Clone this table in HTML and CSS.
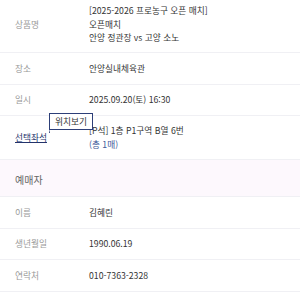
FILE: index.html
```html
<!DOCTYPE html>
<html lang="ko">
<head>
  <meta charset="UTF-8">
  <title>예매 정보</title>
  <link rel="stylesheet" href="styles.css">
</head>
<body>

<div class="info-list">
  <div class="info-row first">
    <div class="info-label">상품명</div>
    <div class="info-value">
      [2025-2026 프로농구 오픈 매치]<br>
      오픈매치<br>
      안양 정관장 vs 고양 소노
    </div>
  </div>
  <div class="info-row">
    <div class="info-label">장소</div>
    <div class="info-value">안양실내체육관</div>
  </div>
  <div class="info-row">
    <div class="info-label">일시</div>
    <div class="info-value">2025.09.20(토) 16:30</div>
  </div>
  <div class="info-row seat-row">
    <div class="info-label">
      <a class="seat-link" href="#">선택좌석</a>
      <span class="seat-tip">위치보기</span>
    </div>
    <div class="info-value">
      [P석] 1층 P1구역 B열 6번<br>
      <span class="seat-count">(총 1매)</span>
    </div>
  </div>
</div>

<div class="section-title">예매자</div>

<div class="info-list">
  <div class="info-row">
    <div class="info-label">이름</div>
    <div class="info-value">김혜린</div>
  </div>
  <div class="info-row">
    <div class="info-label">생년월일</div>
    <div class="info-value">1990.06.19</div>
  </div>
  <div class="info-row">
    <div class="info-label">연락처</div>
    <div class="info-value">010-7363-2328</div>
  </div>
</div>

</body>
</html>
```
FILE: styles.css
```css
body {
  margin: 0;
  background-color: #ffffff;
  color: #333333;
  font-family: "Noto Sans CJK KR", "Noto Sans", sans-serif;
  font-size: 8.7px;
  line-height: 13.5px;
}

.info-row {
  display: flex;
  align-items: center;
  padding: 8.5px 15px;
  border-bottom: 1px solid #f0f0f4;
}

.info-row.first {
  padding-top: 4px;
  padding-bottom: 7.5px;
}

.info-row.seat-row {
  padding-top: 8px;
  padding-bottom: 8px;
}

.info-label {
  width: 74px;
  flex-shrink: 0;
  color: #999999;
  position: relative;
}

.info-value {
  color: #333333;
}

.seat-link {
  color: #23336b;
  text-decoration: underline;
}

/* speech bubble over the seat link */
.seat-tip {
  position: absolute;
  left: 34px;
  top: -18px;
  padding: 0 5px;
  line-height: 15px;
  background-color: #ffffff;
  border: 1px solid #2d3f78;
  color: #333333;
  white-space: nowrap;
}

.seat-tip::after {
  content: "";
  position: absolute;
  left: -1px;
  bottom: -4px;
  border-left: 1px solid #2d3f78;
  border-top: 4px solid transparent;
  border-right: 4px solid transparent;
  width: 0;
  height: 0;
}

.seat-count {
  color: #3e5a9a;
}

.section-title {
  padding: 12.5px 15px 9.5px;
  background-color: #fdf8fd;
  color: #666666;
  font-size: 10px;
  line-height: 14px;
  border-bottom: 1px solid #f0f0f4;
}
```
